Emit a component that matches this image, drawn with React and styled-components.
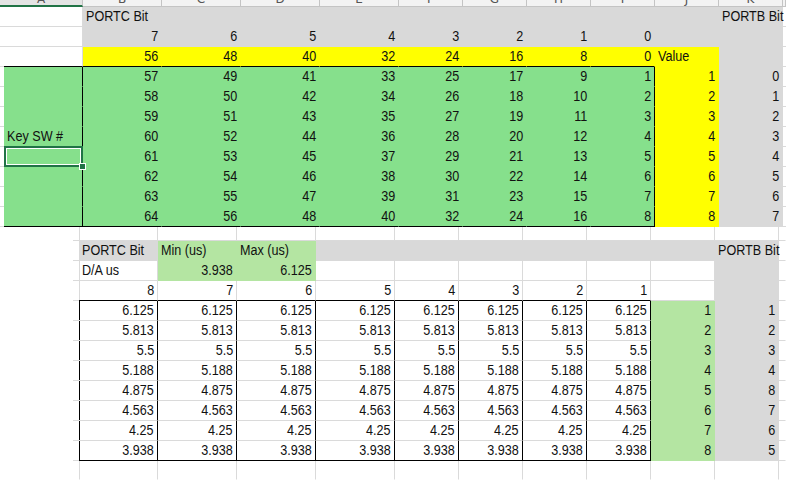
import React from 'react';
import styled, { createGlobalStyle } from 'styled-components';

const C = {
  grid: '#dadada',
  black: '#000000',
  gray: '#d9d9d9',
  yellow: '#ffff00',
  green: '#86e08c',
  lightGreen: '#b4e5a2',
  select: '#217346',
  headBg: '#f3f3f3',
  headLine: '#c4c4c4',
};

const GlobalStyle = createGlobalStyle`
  html, body { margin: 0; padding: 0; background: #ffffff; }
  body {
    font-family: "Liberation Sans Narrow", "Arial Narrow", "Liberation Sans", Arial, sans-serif;
    color: #111;
  }
`;

const Page = styled.div`
  width: 786px;
  height: 481px;
  overflow: hidden;
  display: flex;
  flex-direction: column;
  background: #fff;
`;

const Grid = styled.div`
  display: grid;
  grid-template-columns: ${(p) => p.$cols};
`;

const edge = (kind) =>
  kind === 'black' ? C.black : kind === 'grid' ? C.grid : 'transparent';

const Cell = styled.div`
  position: relative;
  box-sizing: border-box;
  min-width: 0;
  height: ${(p) => p.$h || 20}px;
  line-height: ${(p) => (p.$h || 20) - 1}px;
  padding: 0 3px;
  font-size: 14.67px;
  white-space: nowrap;
  text-align: ${(p) => p.$align || 'right'};
  background: ${(p) => p.$bg || 'transparent'};
  border-right: 1px solid ${(p) => edge(p.$r)};
  border-bottom: 1px solid ${(p) => edge(p.$b)};
`;

/* Excel's narrow default face: the regular sans is compressed to its width */
const Text = styled.span`
  display: inline-block;
  transform: scaleX(0.86);
  transform-origin: ${(p) => (p.$align === 'left' ? 'left' : 'right')} center;
`;

const Selection = styled.span`
  position: absolute;
  top: -1px;
  left: 0;
  right: -1px;
  bottom: -1px;
  border: 2px solid ${C.select};
  box-shadow: inset 0 0 0 1px #ffffff;
  pointer-events: none;
  z-index: 2;
  &::after {
    content: '';
    position: absolute;
    right: -5px;
    bottom: -5px;
    width: 5px;
    height: 5px;
    background: ${C.select};
    border: 1px solid #ffffff;
  }
`;

const HeadStrip = styled.div`
  display: grid;
  grid-template-columns: ${(p) => p.$cols};
  height: 7px;
  background: ${C.headBg};
`;

const ColHead = styled.div`
  box-sizing: border-box;
  height: 7px;
  overflow: hidden;
  display: flex;
  justify-content: center;
  align-items: flex-start;
  grid-column: span ${(p) => p.$span || 1};
  border-right: 1px solid ${C.headLine};
  border-bottom: ${(p) => (p.$active ? `2px solid ${C.select}` : `1px solid ${C.headLine}`)};
  background: ${(p) => (p.$active ? '#e4e4e4' : C.headBg)};
`;

const Letter = styled.span`
  font-family: "DejaVu Sans", "Liberation Sans", sans-serif;
  font-size: 12px;
  line-height: 12px;
  margin-top: -7px;
  color: #555;
`;

const TopCols = '4px 79px 79px 79px 79px 79px 64px 64px 64px 64px 64px 64px 3px';
const BottomCols = '73px 6px 79px 79px 79px 79px 64px 64px 64px 64px 64px 64px 7px';

const range8 = [0, 1, 2, 3, 4, 5, 6, 7];

function buildTopRows() {
  const rows = [];
  rows.push([
    { b: 'grid' },
    { r: 'grid', b: 'grid' },
    { bg: C.gray, t: 'PORTC Bit', align: 'left' },
    ...range8.slice(1).map(() => ({ bg: C.gray })),
    { bg: C.gray },
    { bg: C.gray, t: 'PORTB Bit', align: 'left' },
    { b: 'grid' },
  ]);
  rows.push([
    { b: 'grid' },
    { r: 'grid', b: 'grid' },
    ...range8.map((k) => ({ bg: C.gray, t: 7 - k })),
    { bg: C.gray },
    { bg: C.gray },
    { b: 'grid' },
  ]);
  rows.push([
    { b: 'grid' },
    { r: 'grid', b: 'black' },
    ...range8.map((k) => ({ bg: C.yellow, t: (7 - k) * 8, b: 'black' })),
    { bg: C.yellow, t: 'Value', align: 'left' },
    { bg: C.gray },
    { b: 'grid' },
  ]);
  range8.forEach((i) => {
    const last = i === 7;
    rows.push([
      { r: 'black', b: 'grid' },
      {
        bg: C.green,
        r: 'black',
        b: last ? 'black' : undefined,
        t: i === 3 ? 'Key SW #' : '',
        align: 'left',
        selected: i === 4,
      },
      ...range8.map((k) => ({
        bg: C.green,
        t: (7 - k) * 8 + i + 1,
        r: k === 7 ? 'black' : undefined,
        b: last ? 'black' : undefined,
      })),
      { bg: C.yellow, t: i + 1 },
      { bg: C.gray, t: i },
      { b: 'grid' },
    ]);
  });
  return rows;
}

const VALUES = ['6.125', '5.813', '5.5', '5.188', '4.875', '4.563', '4.25', '3.938'];
const PORTB = [1, 2, 3, 4, 8, 7, 6, 5];

function buildBottomRows() {
  const rows = [];
  const gridCell = (extra = {}) => ({ r: 'grid', b: 'grid', ...extra });
  rows.push({
    h: 14,
    cells: [{}, gridCell(), ...Array.from({ length: 10 }, () => gridCell()), { b: 'grid' }],
  });
  rows.push({
    cells: [
      {},
      gridCell(),
      { bg: C.gray, t: 'PORTC Bit', align: 'left' },
      { bg: C.lightGreen, t: 'Min (us)', align: 'left' },
      { bg: C.lightGreen, t: 'Max (us)', align: 'left' },
      ...Array.from({ length: 6 }, () => ({ bg: C.gray })),
      { bg: C.gray, t: 'PORTB Bit', align: 'left' },
      { b: 'grid' },
    ],
  });
  rows.push({
    cells: [
      {},
      gridCell(),
      gridCell({ t: 'D/A us', align: 'left' }),
      { bg: C.lightGreen, t: '3.938' },
      { bg: C.lightGreen, t: '6.125' },
      ...Array.from({ length: 6 }, () => gridCell()),
      { bg: C.gray },
      { b: 'grid' },
    ],
  });
  rows.push({
    cells: [
      {},
      gridCell(),
      ...range8.map((k) => gridCell({ t: 8 - k, b: 'black' })),
      gridCell(),
      { bg: C.gray },
      { b: 'grid' },
    ],
  });
  VALUES.forEach((v, i) => {
    const last = i === 7;
    rows.push({
      cells: [
        {},
        { r: 'black', b: 'grid' },
        ...range8.map(() => ({ t: v, r: 'black', b: last ? 'black' : 'grid' })),
        { bg: C.lightGreen, t: i + 1 },
        { bg: C.gray, t: PORTB[i] },
        { b: 'grid' },
      ],
    });
  });
  rows.push({
    h: 19,
    cells: [{}, { r: 'grid' }, ...Array.from({ length: 10 }, () => ({ r: 'grid' })), {}],
  });
  return rows;
}

const TOP_ROWS = buildTopRows();
const BOTTOM_ROWS = buildBottomRows();
const LETTERS = ['B', 'C', 'D', 'E', 'F', 'G', 'H', 'I', 'J', 'K'];

function SheetCell({ c, h }) {
  const hasText = c.t !== undefined && c.t !== '';
  return (
    <Cell $bg={c.bg} $r={c.r} $b={c.b} $align={c.align} $h={h}>
      {hasText && <Text $align={c.align}>{c.t}</Text>}
      {c.selected && <Selection />}
    </Cell>
  );
}

export default function App() {
  return (
    <Page>
      <GlobalStyle />
      <HeadStrip $cols={TopCols}>
        <ColHead $span={2} $active>
          <Letter>A</Letter>
        </ColHead>
        {LETTERS.map((l) => (
          <ColHead key={l}>
            <Letter>{l}</Letter>
          </ColHead>
        ))}
        <ColHead />
      </HeadStrip>
      <Grid $cols={TopCols}>
        {TOP_ROWS.map((row, ri) =>
          row.map((c, ci) => <SheetCell key={`t${ri}-${ci}`} c={c} />)
        )}
      </Grid>
      <Grid $cols={BottomCols}>
        {BOTTOM_ROWS.map((row, ri) =>
          row.cells.map((c, ci) => <SheetCell key={`b${ri}-${ci}`} c={c} h={row.h} />)
        )}
      </Grid>
    </Page>
  );
}
